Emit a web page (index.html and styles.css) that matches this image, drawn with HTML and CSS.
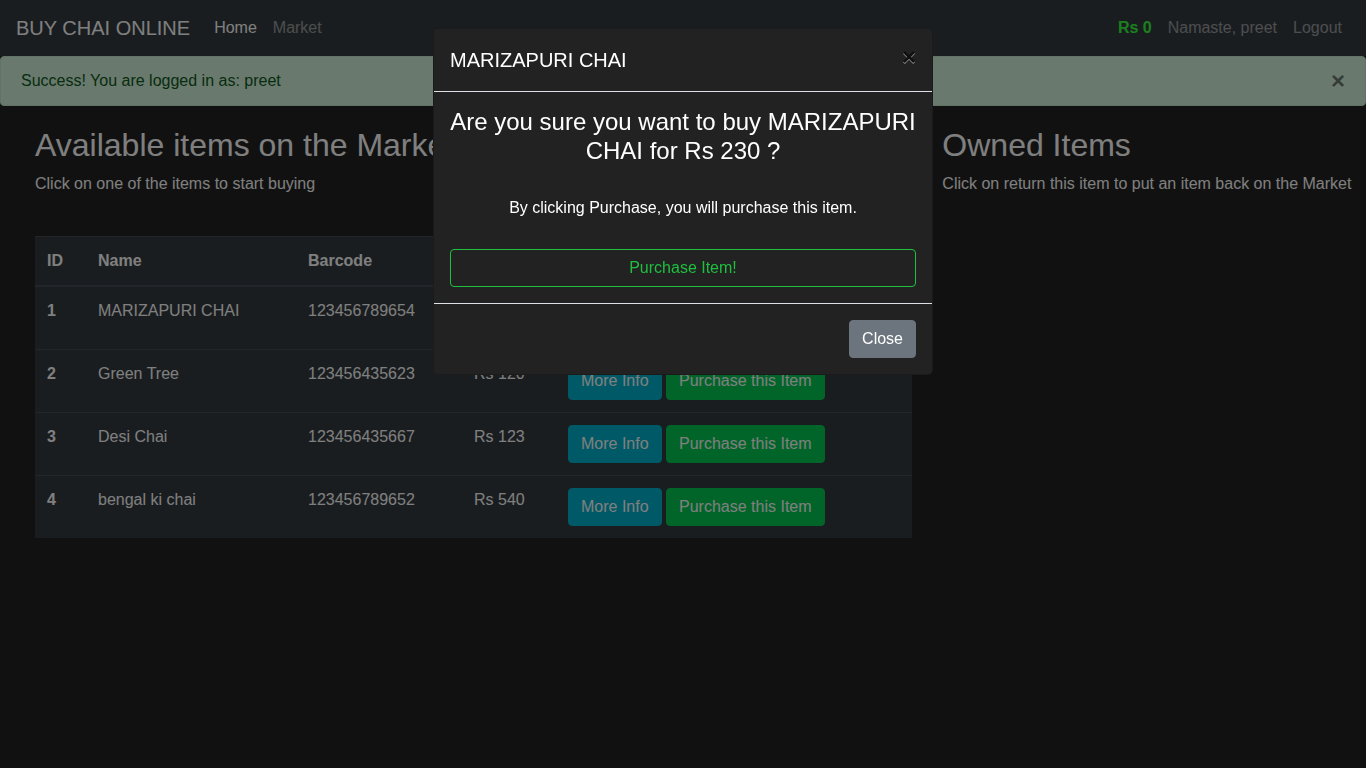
FILE: index.html
```html
<!DOCTYPE html>
<html lang="en">
<head>
<meta charset="utf-8">
<title>Market</title>
<link rel="stylesheet" href="styles.css">
</head>
<body>
<nav class="navbar">
  <a class="brand" href="#">BUY CHAI ONLINE</a>
  <ul class="nav">
    <li><a class="nav-link active" href="#">Home</a></li>
    <li><a class="nav-link" href="#">Market</a></li>
  </ul>
  <ul class="nav nav-right">
    <li><span class="nav-link budget">Rs 0</span></li>
    <li><a class="nav-link" href="#">Namaste, preet</a></li>
    <li><a class="nav-link" href="#">Logout</a></li>
  </ul>
</nav>

<div class="alert">
  Success! You are logged in as: preet
  <button class="alert-close" type="button">&times;</button>
</div>

<div class="content">
  <div class="col-main">
    <h2 class="heading">Available items on the Market</h2>
    <p class="lead-text">Click on one of the items to start buying</p>
    <br>
    <table class="market">
      <thead>
        <tr>
          <th class="c-id">ID</th>
          <th class="c-name">Name</th>
          <th class="c-code">Barcode</th>
          <th class="c-price">Price</th>
          <th class="c-opt">Options</th>
        </tr>
      </thead>
      <tbody>
        <tr>
          <td class="bold">1</td>
          <td>MARIZAPURI CHAI</td>
          <td>123456789654</td>
          <td>Rs 230</td>
          <td><button class="btn btn-info">More Info</button> <button class="btn btn-success">Purchase this Item</button></td>
        </tr>
        <tr>
          <td class="bold">2</td>
          <td>Green Tree</td>
          <td>123456435623</td>
          <td>Rs 120</td>
          <td><button class="btn btn-info">More Info</button> <button class="btn btn-success">Purchase this Item</button></td>
        </tr>
        <tr>
          <td class="bold">3</td>
          <td>Desi Chai</td>
          <td>123456435667</td>
          <td>Rs 123</td>
          <td><button class="btn btn-info">More Info</button> <button class="btn btn-success">Purchase this Item</button></td>
        </tr>
        <tr>
          <td class="bold">4</td>
          <td>bengal ki chai</td>
          <td>123456789652</td>
          <td>Rs 540</td>
          <td><button class="btn btn-info">More Info</button> <button class="btn btn-success">Purchase this Item</button></td>
        </tr>
      </tbody>
    </table>
  </div>
  <div class="col-side">
    <h2 class="heading">Owned Items</h2>
    <p class="lead-text">Click on return this item to put an item back on the Market</p>
  </div>
</div>

<div class="backdrop"></div>

<div class="modal">
  <div class="modal-dialog">
    <div class="modal-content">
      <div class="modal-header">
        <h5 class="modal-title">MARIZAPURI CHAI</h5>
        <button class="modal-close" type="button">&times;</button>
      </div>
      <div class="modal-body">
        <h4 class="confirm">Are you sure you want to buy MARIZAPURI CHAI for Rs 230 ?</h4>
        <p class="confirm-note">By clicking Purchase, you will purchase this item.</p>
        <button class="btn btn-outline-success btn-block">Purchase Item!</button>
      </div>
      <div class="modal-footer">
        <button class="btn btn-secondary">Close</button>
      </div>
    </div>
  </div>
</div>
</body>
</html>
```

FILE: styles.css
```css
* {
  box-sizing: border-box;
}

html, body {
  margin: 0;
  padding: 0;
}

body {
  font-family: "Liberation Sans", Arial, sans-serif;
  font-size: 16px;
  line-height: 1.5;
  color: #ffffff;
  background: #222222;
  overflow: hidden;
  height: 768px;
}

a {
  text-decoration: none;
}

/* Navbar */
.navbar {
  display: flex;
  align-items: center;
  height: 56px;
  padding: 8px 16px;
  background: #343a40;
}

.brand {
  font-size: 20px;
  line-height: 30px;
  padding: 5px 0;
  margin-right: 16px;
  color: #ffffff;
  white-space: nowrap;
}

.nav {
  display: flex;
  list-style: none;
  margin: 0;
  padding: 0;
}

.nav-right {
  margin-left: auto;
}

.nav-link {
  display: block;
  padding: 8px;
  line-height: 24px;
  color: rgba(255, 255, 255, 0.5);
}

.nav-link.active {
  color: #ffffff;
}

.nav-link.budget {
  color: #36ff3e;
  font-weight: 700;
}

/* Alert */
.alert {
  position: relative;
  padding: 12px 64px 12px 20px;
  border: 1px solid #c3e6cb;
  border-radius: 4px;
  background: #d2f2da;
  color: #0f5a22;
  line-height: 24px;
}

.alert-close {
  position: absolute;
  top: 0;
  right: 0;
  padding: 12px 20px;
  border: 0;
  background: transparent;
  font-family: inherit;
  font-size: 24px;
  font-weight: 700;
  line-height: 1;
  color: #000000;
  text-shadow: 0 1px 0 #fff;
  opacity: 0.5;
}

/* Main content */
.content {
  display: flex;
  margin-top: 20px;
  padding-left: 20px;
}

.col-main {
  flex: 0 0 907.33px;
  padding: 0 15px;
}

.col-side {
  flex: 1 1 auto;
  padding-left: 15px;
  white-space: nowrap;
}

.heading {
  margin: 0 0 8px;
  font-size: 32px;
  font-weight: 500;
  line-height: 1.2;
}

.lead-text {
  margin: 0 0 16px;
}

/* Table */
.market {
  width: 100%;
  table-layout: fixed;
  border-collapse: collapse;
  background: #343a40;
  color: #ffffff;
}

.market th,
.market td {
  padding: 12px;
  text-align: left;
  vertical-align: top;
  border-top: 1px solid #454d55;
}

.market thead th {
  font-weight: 700;
  vertical-align: bottom;
  border-bottom: 2px solid #454d55;
}

.market tbody tr:first-child td {
  border-top: 0;
}

.c-id { width: 51px; }
.c-name { width: 210px; }
.c-code { width: 166px; }
.c-price { width: 94px; }

.bold {
  font-weight: 700;
}

/* Buttons */
.btn {
  display: inline-block;
  padding: 6px 12px;
  border: 1px solid transparent;
  border-radius: 4px;
  font-family: inherit;
  font-size: 16px;
  line-height: 24px;
  color: #ffffff;
  background: transparent;
  cursor: pointer;
  vertical-align: middle;
}

.btn-info {
  background: #00b3cc;
  border-color: #00b3cc;
}

.btn-success {
  background: #02cb52;
  border-color: #02cb52;
}

.btn-secondary {
  background: #6c757d;
  border-color: #6c757d;
  margin: 4px;
}

.btn-outline-success {
  color: #1fbf3f;
  border-color: #1fbf3f;
}

.btn-block {
  display: block;
  width: 100%;
}

/* Backdrop + modal */
.backdrop {
  position: fixed;
  inset: 0;
  background: rgba(0, 0, 0, 0.5);
}

.modal {
  position: fixed;
  inset: 0;
}

.modal-dialog {
  width: 500px;
  margin: 28px auto;
}

.modal-content {
  display: flex;
  flex-direction: column;
  background: #222222;
  border: 1px solid rgba(0, 0, 0, 0.2);
  border-radius: 5px;
  color: #ffffff;
}

.modal-header {
  display: flex;
  align-items: flex-start;
  justify-content: space-between;
  padding: 16px;
  border-bottom: 1px solid #dee2e6;
}

.modal-title {
  margin: 0;
  font-size: 20px;
  font-weight: 500;
  line-height: 30px;
}

.modal-close {
  padding: 16px;
  margin: -16px -16px -16px auto;
  border: 0;
  background: transparent;
  font-family: inherit;
  font-size: 24px;
  font-weight: 700;
  line-height: 1;
  color: #000000;
  text-shadow: 0 1px 0 #fff;
  opacity: 0.5;
}

.modal-body {
  padding: 16px;
}

.confirm {
  margin: 0 -4px 8px;
  font-size: 24px;
  font-weight: 500;
  line-height: 1.2;
  text-align: center;
}

.confirm-note {
  margin: 30px 0 29px;
  text-align: center;
}

.modal-footer {
  display: flex;
  justify-content: flex-end;
  align-items: center;
  padding: 12px;
  border-top: 1px solid #dee2e6;
}
```
